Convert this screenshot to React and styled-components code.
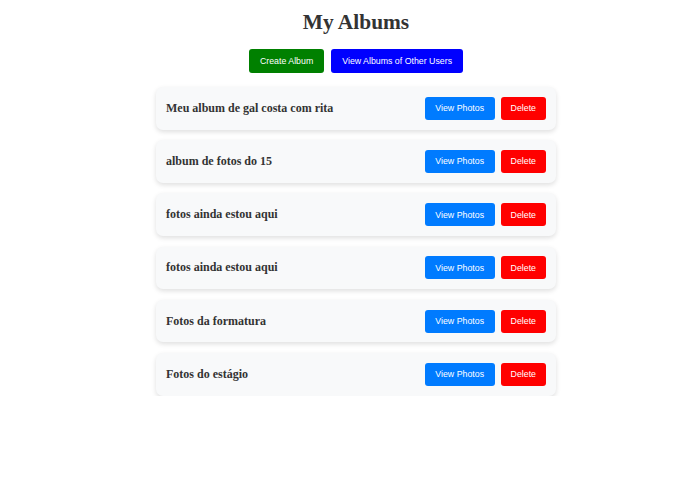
import React from 'react'
import styled, { createGlobalStyle } from 'styled-components'

const GlobalStyle = createGlobalStyle`
    body {
        margin: 0;
        background: #fff;
        font-family: "Liberation Serif", "Times New Roman", serif;
    }
`

const Page = styled.div`
    display: flex;
    flex-direction: column;
    align-items: center;
    padding: 10px 0 0 34px;
`

const Title = styled.h1`
    margin: 0;
    font-size: 21.4px;
    line-height: 24px;
    font-weight: bold;
    color: #333;
`

const Toolbar = styled.div`
    display: flex;
    gap: 7px;
    margin-top: 15px;
`

const Button = styled.button`
    height: ${props => props.h || 24}px;
    padding: 0 ${props => props.px || 11}px;
    border: none;
    border-radius: 3px;
    background-color: ${props => props.bg};
    color: #fff;
    font-family: "Liberation Sans", Arial, sans-serif;
    font-size: 8.8px;
    cursor: pointer;
`

const List = styled.div`
    display: flex;
    flex-direction: column;
    gap: 10.6px;
    width: 400px;
    margin-top: 14px;
`

const Card = styled.div`
    display: flex;
    align-items: center;
    justify-content: space-between;
    height: 42.6px;
    padding: 0 10px;
    box-sizing: border-box;
    background-color: #f8f9fa;
    border-radius: 7px;
    box-shadow: 0 2px 5px rgba(0, 0, 0, 0.13);
`

const AlbumName = styled.span`
    font-size: 12px;
    font-weight: bold;
    color: #333;
`

const Actions = styled.div`
    display: flex;
    gap: 6px;
`

const albums = [
    'Meu album de gal costa com rita',
    'album de fotos do 15',
    'fotos ainda estou aqui',
    'fotos ainda estou aqui',
    'Fotos da formatura',
    'Fotos do estágio',
]

const App = () => {
    return <Page>
        <GlobalStyle />
        <Title>My Albums</Title>
        <Toolbar>
            <Button bg="#008000">Create Album</Button>
            <Button bg="#0000ff">View Albums of Other Users</Button>
        </Toolbar>
        <List>
            {albums.map((name, i) => (
                <Card key={i}>
                    <AlbumName>{name}</AlbumName>
                    <Actions>
                        <Button bg="#007bff" h={23} px={10.5}>View Photos</Button>
                        <Button bg="#ff0000" h={23} px={10}>Delete</Button>
                    </Actions>
                </Card>
            ))}
        </List>
    </Page>
}

export default App
